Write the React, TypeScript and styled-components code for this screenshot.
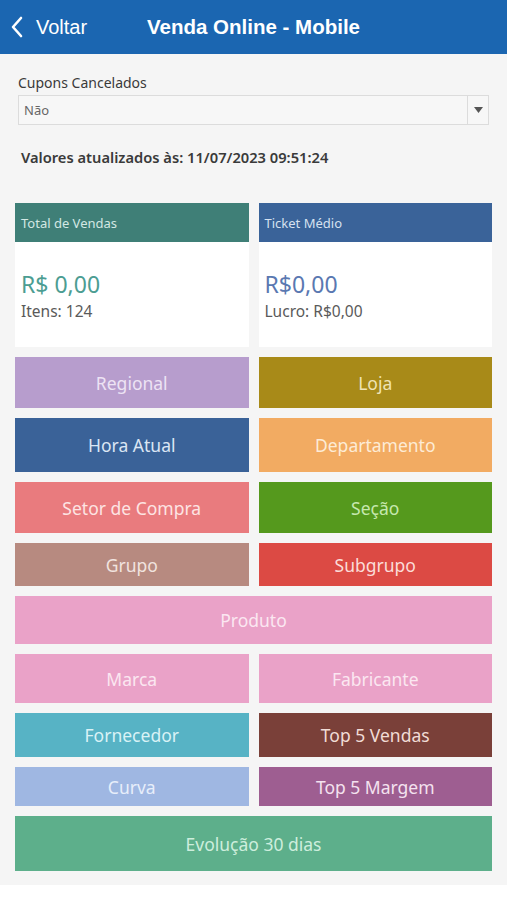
import React from 'react';
import styled, { createGlobalStyle } from 'styled-components';

const GlobalStyle = createGlobalStyle`
  html, body {
    margin: 0;
    padding: 0;
    background: #ffffff;
  }
  * { box-sizing: border-box; }
`;

const Page = styled.div`
  width: 507px;
  font-family: "Noto Sans", "Open Sans", sans-serif;
`;

const Header = styled.header`
  height: 54px;
  background: #1b66b1;
  display: grid;
  grid-template-columns: 1fr auto 1fr;
  align-items: center;
  color: #ffffff;
  font-family: "Liberation Sans", Arial, sans-serif;
`;

const Back = styled.div`
  display: flex;
  align-items: center;
  gap: 13px;
  padding-left: 11px;
  font-size: 20px;
  svg { display: block; }
`;

const Title = styled.h1`
  margin: 0;
  font-size: 20.5px;
  font-weight: bold;
`;

const Body = styled.main`
  background: #f5f5f5;
  padding: 20px 15px 14px;
`;

const Filter = styled.div`
  padding: 0 3px;
`;

const Label = styled.div`
  font-size: 14px;
  color: #3a3a3a;
  line-height: 18px;
  margin-bottom: 3px;
`;

const Select = styled.div`
  height: 30px;
  display: flex;
  border: 1px solid #dcdcdc;
  background: #f7f7f7;
`;

const SelectValue = styled.div`
  flex: 1;
  display: flex;
  align-items: center;
  padding-left: 5px;
  font-size: 13px;
  color: #666;
`;

const SelectArrow = styled.div`
  width: 21px;
  border-left: 1px solid #dcdcdc;
  display: flex;
  align-items: center;
  justify-content: center;
`;

const Updated = styled.div`
  margin: 23px 0 0 6px;
  font-size: 14.7px;
  font-weight: 600;
  color: #3a3a3a;
  line-height: 18px;
`;

const Grid = styled.div`
  margin-top: 37px;
  display: flex;
  flex-direction: column;
  gap: 10px;
`;

const Row = styled.div<{ $h: number }>`
  display: flex;
  gap: 10px;
  height: ${p => p.$h}px;
`;

const Card = styled.div`
  flex: 1;
  background: #ffffff;
  display: flex;
  flex-direction: column;
`;

const CardHead = styled.div<{ $bg: string; $fg: string }>`
  height: 39px;
  background: ${p => p.$bg};
  color: ${p => p.$fg};
  font-size: 13px;
  display: flex;
  align-items: center;
  padding-left: 6px;
`;

const CardBody = styled.div`
  padding: 27px 6px 0;
`;

const Value = styled.div<{ $fg: string }>`
  font-size: 23px;
  line-height: 31px;
  color: ${p => p.$fg};
`;

const Sub = styled.div`
  font-size: 15.5px;
  color: #5a5a5a;
  line-height: 20px;
  margin-top: 1px;
`;

const Tile = styled.div<{ $bg: string; $fg: string }>`
  flex: 1;
  background: ${p => p.$bg};
  color: ${p => p.$fg};
  font-size: 17.5px;
  display: flex;
  align-items: center;
  justify-content: center;
`;

type T = { label: string; bg: string; fg: string };

const rows: { h: number; tiles: T[] }[] = [
  { h: 51, tiles: [
    { label: 'Regional', bg: '#b79dcd', fg: '#ede3f4' },
    { label: 'Loja', bg: '#a88a18', fg: '#efe3b5' },
  ] },
  { h: 54, tiles: [
    { label: 'Hora Atual', bg: '#3a6298', fg: '#dbe6f4' },
    { label: 'Departamento', bg: '#f2ab62', fg: '#fdebd6' },
  ] },
  { h: 51, tiles: [
    { label: 'Setor de Compra', bg: '#e97b7e', fg: '#fde4e3' },
    { label: 'Seção', bg: '#55991d', fg: '#c6e8ae' },
  ] },
  { h: 43, tiles: [
    { label: 'Grupo', bg: '#b78a80', fg: '#f1e3df' },
    { label: 'Subgrupo', bg: '#dc4a44', fg: '#fbdcd8' },
  ] },
  { h: 48, tiles: [
    { label: 'Produto', bg: '#eaa2c8', fg: '#fbe7f1' },
  ] },
  { h: 49, tiles: [
    { label: 'Marca', bg: '#eaa2c8', fg: '#fbe7f1' },
    { label: 'Fabricante', bg: '#eaa2c8', fg: '#fbe7f1' },
  ] },
  { h: 44, tiles: [
    { label: 'Fornecedor', bg: '#57b3c5', fg: '#d9f2f6' },
    { label: 'Top 5 Vendas', bg: '#7a4039', fg: '#f1dcd6' },
  ] },
  { h: 39, tiles: [
    { label: 'Curva', bg: '#9fb7e2', fg: '#e7eefa' },
    { label: 'Top 5 Margem', bg: '#9e5e91', fg: '#f4e2ef' },
  ] },
  { h: 55, tiles: [
    { label: 'Evolução 30 dias', bg: '#5daf8b', fg: '#cdeedd' },
  ] },
];

export default function App() {
  return (
    <Page>
      <GlobalStyle />
      <Header>
        <Back>
          <svg width="12" height="22" viewBox="0 0 12 22">
            <path d="M10 2 L2 11 L10 20" fill="none" stroke="#fff" strokeWidth="2.6" strokeLinecap="round" strokeLinejoin="round" />
          </svg>
          <span>Voltar</span>
        </Back>
        <Title>Venda Online - Mobile</Title>
        <div />
      </Header>
      <Body>
        <Filter>
          <Label>Cupons Cancelados</Label>
          <Select>
            <SelectValue>Não</SelectValue>
            <SelectArrow>
              <svg width="9" height="6" viewBox="0 0 9 6">
                <path d="M0 0 H9 L4.5 6 Z" fill="#555" />
              </svg>
            </SelectArrow>
          </Select>
        </Filter>
        <Updated>Valores atualizados às: 11/07/2023 09:51:24</Updated>
        <Grid>
          <Row $h={144}>
            <Card>
              <CardHead $bg="#3f7f77" $fg="#d3e8e4">Total de Vendas</CardHead>
              <CardBody>
                <Value $fg="#4c9d92">R$ 0,00</Value>
                <Sub>Itens: 124</Sub>
              </CardBody>
            </Card>
            <Card>
              <CardHead $bg="#3a6399" $fg="#d6e1f0">Ticket Médio</CardHead>
              <CardBody>
                <Value $fg="#5a78b1">R$0,00</Value>
                <Sub>Lucro: R$0,00</Sub>
              </CardBody>
            </Card>
          </Row>
          {rows.map((r, i) => (
            <Row key={i} $h={r.h}>
              {r.tiles.map(t => (
                <Tile key={t.label} $bg={t.bg} $fg={t.fg}>{t.label}</Tile>
              ))}
            </Row>
          ))}
        </Grid>
      </Body>
    </Page>
  );
}
